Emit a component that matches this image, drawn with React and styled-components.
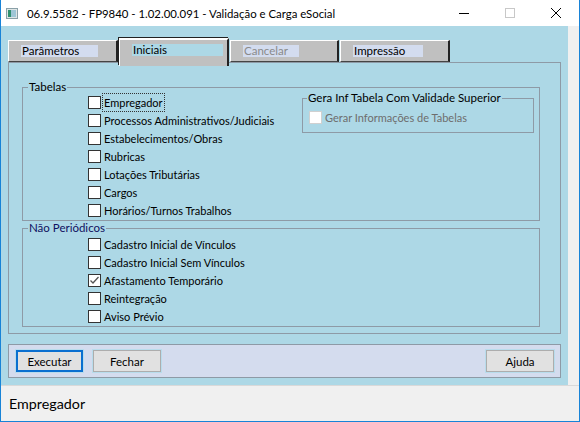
import React from 'react'
import styled, { createGlobalStyle } from 'styled-components'

const GlobalStyle = createGlobalStyle`
    html, body {
        margin:0;
        padding:0;
        background:#f0f0f0;
    }
    body{
        font-family:Lato, "Noto Sans", sans-serif;
        font-size:11px;
        color:#000;
    }
`;

const Window = styled.div`
    width:580px;
    height:422px;
    box-sizing:border-box;
    border:1px solid #1883d7;
    border-top:none;
    display:flex;
    flex-direction:column;
    background:#f0f0f0;
    overflow:hidden;
`;

const TitleBar = styled.div`
    height:26px;
    flex:none;
    background:#fff;
    display:flex;
    align-items:center;
    padding-left:5px;
`;

const Title = styled.span`
    font-size:11.4px;
    margin-left:9px;
    flex:1;
    white-space:nowrap;
`;

const Controls = styled.div`
    display:flex;
    align-items:center;
    height:100%;
`;

const CtrlButton = styled.div`
    width:46px;
    height:100%;
    display:flex;
    align-items:center;
    justify-content:center;
`;

const Client = styled.div`
    flex:1;
    display:flex;
    flex-direction:column;
`;

const Main = styled.div`
    display:flex;
    height:359px;
`;

const Content = styled.div`
    width:567px;
    background:#add8e6;
    box-sizing:border-box;
    padding:12px 0 0 7px;
    display:flex;
    flex-direction:column;
`;

const TabRow = styled.div`
    display:flex;
    align-items:flex-end;
    height:24px;
    position:relative;
    z-index:1;
`;

const Tab = styled.div`
    width:${p => p.w}px;
    height:${p => p.active ? 28 : 22}px;
    margin-bottom:${p => p.active ? -4 : 0}px;
    box-sizing:border-box;
    background:#c0c0c0;
    border-top:${p => p.active ? '2px solid #fff' : '1px solid #fff'};
    border-left:1px solid #fff;
    border-right:2px solid #222;
    box-shadow:${p => p.active ? '-1px -1px 0 #222' : 'none'};
    ${p => !p.active && 'border-bottom:1px solid #444;'}
    padding:4px 0 0 ${p => p.pad}px;
    margin-right:1px;
`;

const TabLabel = styled.span`
    display:block;
    width:${p => p.w}px;
    height:12px;
    line-height:12px;
    padding-left:1px;
    font-size:11.5px;
    background:${p => p.active ? '#add8e6' : '#d3dcef'};
    color:${p => p.disabled ? '#8a8a8a' : '#000'};
    white-space:nowrap;
`;

const Panel = styled.div`
    width:553px;
    height:272px;
    box-sizing:border-box;
    border:1px solid #8e9aa6;
    padding:17px 20px 0 13px;
    display:flex;
    flex-direction:column;
`;

const Group = styled.fieldset`
    margin:0;
    padding:0;
    border:1px solid #8e9aa6;
    height:${p => p.h}px;
    box-sizing:border-box;
    min-width:0;
`;

const Legend = styled.legend`
    margin-left:${p => p.inset ?? 5}px;
    padding:0 1px;
    font-size:11.5px;
    line-height:14px;
    white-space:nowrap;
    color:${p => p.navy ? '#101060' : '#000'};
`;

const GroupBody = styled.div`
    display:flex;
    align-items:flex-start;
`;

const List = styled.div`
    display:flex;
    flex-direction:column;
    padding-left:65px;
    margin-top:${p => p.top || 0}px;
`;

const Row = styled.label`
    display:flex;
    align-items:center;
    height:18px;
    gap:3px;
    color:${p => p.disabled ? '#6d6d6d' : '#000'};
`;

const Box = styled.span`
    width:13px;
    height:13px;
    box-sizing:border-box;
    background:#fff;
    border:1px solid ${p => p.disabled ? '#d0d0d0' : '#333'};
    display:flex;
    align-items:center;
    justify-content:center;
    flex:none;
`;

const Text = styled.span`
    white-space:nowrap;
    outline:${p => p.focus ? '1px dotted #333' : 'none'};
    outline-offset:1px;
    line-height:15px;
`;

const SubGroup = styled(Group)`
    width:232px;
    margin:-3px 5px 0 auto;
    padding:3px 0 0 6px;
`;

const ButtonBar = styled.div`
    width:553px;
    height:34px;
    box-sizing:border-box;
    margin-top:10px;
    background:#d4dcee;
    border:1px solid #8e9aa6;
    display:flex;
    align-items:center;
    padding:0 6px 0 7px;
    gap:10px;
`;

const Button = styled.button`
    width:${p => p.w || 68}px;
    height:22px;
    box-sizing:border-box;
    background:#e1e1e1;
    border:${p => p.primary ? '2px solid #0a6fd0' : '1px solid #adadad'};
    box-shadow:0 0 0 1px #b8dcec;
    font-family:inherit;
    font-size:11.5px;
    color:#000;
    padding:0;
    ${p => p.right && 'margin-left:auto;'}
`;

const SideStrip = styled.div`
    flex:1;
    background:#f0f0f0;
`;

const StatusBar = styled.div`
    flex:1;
    border-top:1px solid #d9d9d9;
    padding-left:8px;
    display:flex;
    align-items:center;
    font-size:14.3px;
`;

function Check({ checked, disabled }) {
    return (
        <Box disabled={disabled}>
            {checked && (
                <svg width="11" height="11" viewBox="0 0 11 11">
                    <path d="M1.5 5.5 L4 8 L9.5 2" fill="none" stroke="#555" strokeWidth="1.3" />
                </svg>
            )}
        </Box>
    )
}

const tabelas = [
    'Empregador',
    'Processos Administrativos/Judiciais',
    'Estabelecimentos/Obras',
    'Rubricas',
    'Lotações Tributárias',
    'Cargos',
    'Horários/Turnos Trabalhos',
];

const naoPeriodicos = [
    { t: 'Cadastro Inicial de Vínculos' },
    { t: 'Cadastro Inicial Sem Vínculos' },
    { t: 'Afastamento Temporário', checked: true },
    { t: 'Reintegração' },
    { t: 'Aviso Prévio' },
];

const tabs = [
    { t: 'Parâmetros', w: 110, lw: 76 },
    { t: 'Iniciais', w: 110, lw: 90, active: true },
    { t: 'Cancelar', w: 109, lw: 55, disabled: true },
    { t: 'Impressão', w: 110, lw: 69 },
];

function AppIcon() {
    return (
        <svg width="12" height="11" viewBox="0 0 12 11">
            <rect x="0.5" y="0.5" width="11" height="10" fill="#dfe6e6" stroke="#8aa0a8" />
            <rect x="2" y="2" width="3" height="7" fill="#2f8f6f" />
            <rect x="5" y="2" width="5" height="7" fill="#9fc6d6" />
        </svg>
    )
}

export default function App() {
    return (
        <>
            <GlobalStyle />
            <Window>
                <TitleBar>
                    <AppIcon />
                    <Title>06.9.5582 - FP9840 - 1.02.00.091 - Validação e Carga eSocial</Title>
                    <Controls>
                        <CtrlButton>
                            <svg width="10" height="10" viewBox="0 0 10 10"><path d="M0 5.5 H10" stroke="#000" /></svg>
                        </CtrlButton>
                        <CtrlButton>
                            <svg width="10" height="10" viewBox="0 0 10 10"><rect x="0.5" y="0.5" width="9" height="9" fill="none" stroke="#c8c8c8" /></svg>
                        </CtrlButton>
                        <CtrlButton>
                            <svg width="10" height="10" viewBox="0 0 10 10"><path d="M0 0 L10 10 M10 0 L0 10" stroke="#000" /></svg>
                        </CtrlButton>
                    </Controls>
                </TitleBar>
                <Client>
                    <Main>
                        <Content>
                            <TabRow>
                                {tabs.map(tab => (
                                    <Tab key={tab.t} w={tab.w} active={tab.active} pad={12}>
                                        <TabLabel w={tab.lw} active={tab.active} disabled={tab.disabled}>{tab.t}</TabLabel>
                                    </Tab>
                                ))}
                            </TabRow>
                            <Panel>
                                <Group h={141}>
                                    <Legend>Tabelas</Legend>
                                    <GroupBody>
                                        <List top={-1}>
                                            {tabelas.map((t, i) => (
                                                <Row key={t}>
                                                    <Check />
                                                    <Text focus={i === 0}>{t}</Text>
                                                </Row>
                                            ))}
                                        </List>
                                        <SubGroup h={42}>
                                            <Legend inset={-2}>Gera Inf Tabela Com Validade Superior</Legend>
                                            <Row disabled>
                                                <Check disabled />
                                                <Text>Gerar Informações de Tabelas</Text>
                                            </Row>
                                        </SubGroup>
                                    </GroupBody>
                                </Group>
                                <Group h={106}>
                                    <Legend navy>Não Periódicos</Legend>
                                    <List>
                                        {naoPeriodicos.map(r => (
                                            <Row key={r.t}>
                                                <Check checked={r.checked} />
                                                <Text>{r.t}</Text>
                                            </Row>
                                        ))}
                                    </List>
                                </Group>
                            </Panel>
                            <ButtonBar>
                                <Button primary w={67}>Executar</Button>
                                <Button w={68}>Fechar</Button>
                                <Button w={68} right>Ajuda</Button>
                            </ButtonBar>
                        </Content>
                        <SideStrip />
                    </Main>
                    <StatusBar>Empregador</StatusBar>
                </Client>
            </Window>
        </>
    )
}
